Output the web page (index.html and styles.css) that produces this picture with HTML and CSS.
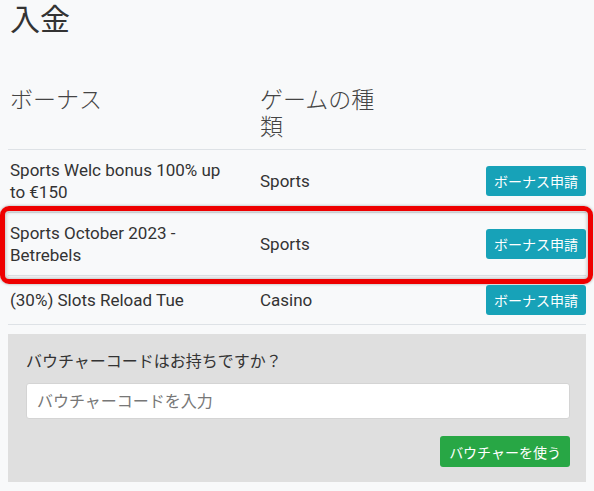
FILE: index.html
```html
<!DOCTYPE html>
<html>
<head>
    <meta charset="utf-8">
    <title>入金</title>
    <link rel="stylesheet" href="styles.css">
</head>
<body>
    <div class="page">
        <h1 class="title">入金</h1>

        <div class="bonus-table">
            <div class="row head">
                <div class="cell">ボーナス</div>
                <div class="cell">ゲームの種類</div>
                <div class="cell"></div>
            </div>
            <div class="row">
                <div class="cell">Sports Welc bonus 100% up to €150</div>
                <div class="cell">Sports</div>
                <div class="cell action"><button class="btn-info">ボーナス申請</button></div>
            </div>
            <div class="row marked">
                <div class="cell">Sports October 2023 - Betrebels</div>
                <div class="cell">Sports</div>
                <div class="cell action"><button class="btn-info">ボーナス申請</button></div>
                <span class="highlight"></span>
            </div>
            <div class="row">
                <div class="cell">(30%) Slots Reload Tue</div>
                <div class="cell">Casino</div>
                <div class="cell action"><button class="btn-info">ボーナス申請</button></div>
            </div>
        </div>

        <div class="voucher">
            <label class="voucher-label" for="voucher">バウチャーコードはお持ちですか？</label>
            <input type="text" id="voucher" class="voucher-input" placeholder="バウチャーコードを入力">
            <div class="voucher-actions">
                <button class="btn-success">バウチャーを使う</button>
            </div>
        </div>
    </div>
</body>
</html>
```

FILE: styles.css
```css
body {
    margin: 0;
    background: #f8f9fa;
    color: #333;
    font-family: Roboto, "Noto Sans CJK JP", sans-serif;
}
.page {
    padding: 0 8px;
}
.title {
    margin: 2px 0 0;
    font-size: 30px;
    font-weight: 400;
    line-height: 36px;
    padding-left: 2px;
}
.bonus-table {
    margin-top: 41px;
}
.row {
    position: relative;
    display: grid;
    grid-template-columns: 250px 126px 1fr;
    align-items: center;
    border-bottom: 1px solid #dee2e6;
    font-size: 17px;
    line-height: 22px;
}
.row.head {
    font-size: 23px;
    font-weight: 300;
    line-height: 27px;
    color: #444;
    align-items: start;
}
.cell {
    padding: 9px 26px 9px 2px;
}
.row.head .cell {
    padding: 8px 2px 8px 2px;
}
.cell.action {
    text-align: right;
    padding-right: 0;
}
.btn-info,
.btn-success {
    border: none;
    border-radius: 3px;
    color: #fff;
    font-family: Roboto, "Noto Sans CJK JP", sans-serif;
    cursor: pointer;
}
.btn-info {
    height: 30px;
    padding: 0 8px;
    font-size: 14px;
    background: #17a2b8;
    vertical-align: middle;
}
.highlight {
    position: absolute;
    top: -7px;
    bottom: -9px;
    left: -8px;
    right: -7px;
    border: 5px solid #ee0000;
    border-radius: 9px;
    box-shadow: 0 0 3px rgba(0,0,0,0.35), inset 0 0 4px rgba(0,0,0,0.35);
    pointer-events: none;
}
.voucher {
    margin-top: 9px;
    padding: 17px 16px 15px 18px;
    background: #dfdfdf;
}
.voucher-label {
    display: block;
    font-size: 16px;
    line-height: 22px;
    color: #333;
}
.voucher-input {
    display: block;
    box-sizing: border-box;
    width: 100%;
    height: 36px;
    margin-top: 10px;
    padding: 0 10px;
    border: 1px solid #d4d4d4;
    border-radius: 3px;
    background: #fff;
    font-size: 16px;
    font-family: Roboto, "Noto Sans CJK JP", sans-serif;
}
.voucher-input::placeholder {
    color: #777;
}
.voucher-actions {
    margin-top: 17px;
    text-align: right;
}
.btn-success {
    height: 31px;
    padding: 0 9px;
    font-size: 14px;
    background: #28a745;
}
```
